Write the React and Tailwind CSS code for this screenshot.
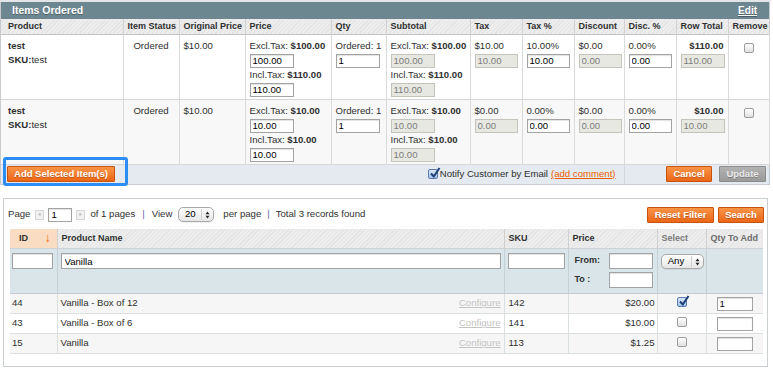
import clsx from 'clsx'

const ITEMS = [
  {
    id: 1,
    price: ['$100.00', '100.00', '$110.00', '110.00'],
    sub: ['$100.00', '100.00', '$110.00', '110.00'],
    tax: ['$10.00', '10.00'],
    taxPct: ['10.00%', '10.00'],
    disc: ['$0.00', '0.00'],
    discPct: ['0.00%', '0.00'],
    total: ['$110.00', '110.00'],
  },
  {
    id: 2,
    price: ['$10.00', '10.00', '$10.00', '10.00'],
    sub: ['$10.00', '10.00', '$10.00', '10.00'],
    tax: ['$0.00', '0.00'],
    taxPct: ['0.00%', '0.00'],
    disc: ['$0.00', '0.00'],
    discPct: ['0.00%', '0.00'],
    total: ['$10.00', '10.00'],
  },
]

const PRODUCTS = [
  { id: 44, name: 'Vanilla - Box of 12', sku: '142', price: '$20.00', checked: true, qty: '1' },
  { id: 43, name: 'Vanilla - Box of 6', sku: '141', price: '$10.00', checked: false, qty: '' },
  { id: 15, name: 'Vanilla', sku: '113', price: '$1.25', checked: false, qty: '' },
]

const stripes =
  'bg-[repeating-linear-gradient(135deg,#ededed_0px,#ededed_2px,#e4e4e4_2px,#e4e4e4_3px)]'

function Field({ value = '', disabled, className }) {
  return (
    <input
      defaultValue={value}
      readOnly
      className={clsx(
        'block h-[14px] border px-[2px] text-[9.6px] leading-[12px] outline-none',
        disabled
          ? 'border-[#c4c4bd] bg-[#e8e8e2] text-[#7d7d7d]'
          : 'border-[#a3a3a3] bg-white text-black shadow-[inset_0_1px_1px_rgba(0,0,0,0.12)]',
        className
      )}
    />
  )
}

function Check({ checked, className }) {
  return (
    <span
      className={clsx(
        'relative inline-flex h-[10px] w-[10px] items-center justify-center rounded-[2px] border align-top',
        checked
          ? 'border-[#5a7bb0] bg-gradient-to-b from-[#d7e6f8] to-[#a9c6ea]'
          : 'border-[#9c9c9c] bg-gradient-to-b from-white to-[#e1e1e1]',
        className
      )}
    >
      {checked && (
        <svg viewBox="0 0 12 12" className="absolute -top-[3px] left-[0px] h-[12px] w-[12px]">
          <path d="M2 6.5 L4.8 9.5 L10.5 1" fill="none" stroke="#1d3d74" strokeWidth="2" />
        </svg>
      )}
    </span>
  )
}

function Button({ children, grey, className }) {
  return (
    <button
      className={clsx(
        'h-[16px] whitespace-nowrap rounded-[1px] border text-[9.5px] font-bold leading-none [text-shadow:0_1px_0_rgba(0,0,0,0.25)]',
        grey
          ? 'border-[#8c8c8c] bg-gradient-to-b from-[#b3b3b3] to-[#9a9a9a] text-[#e9e9e9]'
          : 'border-[#c8530f] bg-gradient-to-b from-[#f99445] to-[#ec6614] text-white',
        className
      )}
    >
      {children}
    </button>
  )
}

function TaxPair({ values, disabled }) {
  return (
    <>
      <p className="whitespace-nowrap">
        Excl.Tax: <b>{values[0]}</b>
      </p>
      <Field value={values[1]} disabled={disabled} className="mt-[2px] w-[44px]" />
      <p className="whitespace-nowrap">
        Incl.Tax: <b>{values[2]}</b>
      </p>
      <Field value={values[3]} disabled={disabled} className="mt-[2px] w-[44px]" />
    </>
  )
}

function ItemRow({ item, shaded }) {
  const cell = 'border-r border-[#dadada] px-[4px] pt-[4px] pb-[2px] align-top leading-[13px]'
  return (
    <tr className={clsx('border-b border-[#d6d6d6]', shaded ? 'bg-[#f8f8f8]' : 'bg-white')}>
      <td className={clsx(cell, 'pl-[7px]')}>
        <p className="font-bold">test</p>
        <p className="mt-[1px]">
          <b>SKU:</b>test
        </p>
      </td>
      <td className={clsx(cell, 'text-center')}>Ordered</td>
      <td className={cell}>$10.00</td>
      <td className={cell}>
        <TaxPair values={item.price} />
      </td>
      <td className={cell}>
        <p className="whitespace-nowrap">Ordered: 1</p>
        <Field value="1" className="mt-[2px] w-[44px]" />
      </td>
      <td className={cell}>
        <TaxPair values={item.sub} disabled />
      </td>
      <td className={cell}>
        <p>{item.tax[0]}</p>
        <Field value={item.tax[1]} disabled className="mt-[2px] w-[43px]" />
      </td>
      <td className={cell}>
        <p>{item.taxPct[0]}</p>
        <Field value={item.taxPct[1]} className="mt-[2px] w-[43px]" />
      </td>
      <td className={cell}>
        <p>{item.disc[0]}</p>
        <Field value={item.disc[1]} disabled className="mt-[2px] w-[43px]" />
      </td>
      <td className={cell}>
        <p>{item.discPct[0]}</p>
        <Field value={item.discPct[1]} className="mt-[2px] w-[43px]" />
      </td>
      <td className={clsx(cell, 'text-right')}>
        <p className="font-bold">{item.total[0]}</p>
        <Field value={item.total[1]} disabled className="mt-[2px] ml-auto w-[44px]" />
      </td>
      <td className={clsx(cell, 'text-center')}>
        <Check className="mt-[4px]" />
      </td>
    </tr>
  )
}

function ArrowBox({ dir, className }) {
  return (
    <span
      className={clsx(
        'inline-flex h-[10px] w-[9px] items-center justify-center border border-[#d6d6d6] bg-[#f1f1f1]',
        className
      )}
    >
      <svg viewBox="0 0 6 6" className="h-[5px] w-[5px]">
        <path d={dir === 'left' ? 'M4.5 0.5 L1 3 L4.5 5.5 Z' : 'M1.5 0.5 L5 3 L1.5 5.5 Z'} fill="#c7c7c7" />
      </svg>
    </span>
  )
}

function Stepper({ label, className }) {
  return (
    <span
      className={clsx(
        'inline-flex h-[15px] items-center rounded-[5px] border border-[#a9a9a9] bg-gradient-to-b from-white to-[#e6e6e6] text-[9.6px] font-normal text-black shadow-[0_1px_0_rgba(0,0,0,0.06)]',
        className
      )}
    >
      <span className="flex-1 text-center">{label}</span>
      <span className="h-[11px] border-l border-[#cfcfcf]" />
      <svg viewBox="0 0 6 10" className="mx-[3px] h-[8px] w-[5px]">
        <path d="M0.5 4 L3 0.5 L5.5 4 Z M0.5 6 L3 9.5 L5.5 6 Z" fill="#222" />
      </svg>
    </span>
  )
}

export default function App() {
  const th = 'whitespace-nowrap border-r border-[#d2d2d2] px-[4px] text-left text-[9px] font-bold text-[#303030]'
  const gth = 'whitespace-nowrap border-r border-[#d0d0d0] px-[4px] text-left text-[9px] font-bold'
  return (
    <div
      className={clsx(
        'relative h-[368px] w-[773px] overflow-hidden bg-white pt-[2px] text-[9.6px] text-[#2f2f2f]',
        "font-['Liberation_Sans',Arial,Helvetica,sans-serif]"
      )}
    >
      <div className="absolute left-0 top-0 h-[2px] w-[771px] bg-[#e3e6e8]" />
      {/* Items ordered */}
      <div className="w-[770px] border-l border-r border-[#c7cbcd]">
        <div className="flex h-[17px] items-center justify-between bg-[#6d8791] pl-[11px] pr-[12px] text-[10.5px] font-bold text-white [text-shadow:0_1px_0_rgba(0,0,0,0.3)]">
          <span>Items Ordered</span>
          <span className="text-[10px] underline">Edit</span>
        </div>
        <table className="w-[768px] table-fixed border-collapse">
          <colgroup>
            <col className="w-[122px]" />
            <col className="w-[56px]" />
            <col className="w-[66px]" />
            <col className="w-[86px]" />
            <col className="w-[55px]" />
            <col className="w-[84px]" />
            <col className="w-[52px]" />
            <col className="w-[52px]" />
            <col className="w-[50px]" />
            <col className="w-[52px]" />
            <col className="w-[52px]" />
            <col className="w-[41px]" />
          </colgroup>
          <thead>
            <tr className={clsx('h-[15px] border-b border-[#c4c4c4] leading-[14px]', stripes)}>
              <th className={clsx(th, 'pl-[7px]')}>Product</th>
              <th className={clsx(th, 'text-center')}>Item Status</th>
              <th className={th}>Original Price</th>
              <th className={th}>Price</th>
              <th className={clsx(th, 'text-center')}>Qty</th>
              <th className={th}>Subtotal</th>
              <th className={th}>Tax</th>
              <th className={th}>Tax %</th>
              <th className={th}>Discount</th>
              <th className={th}>Disc. %</th>
              <th className={clsx(th, 'text-center')}>Row Total</th>
              <th className={clsx(th, 'border-r-0 text-center')}>Remove</th>
            </tr>
          </thead>
          <tbody>
            {ITEMS.map((item, i) => (
              <ItemRow key={item.id} item={item} shaded={i % 2 === 1} />
            ))}
            <tr className="h-[20px] border-b border-[#c9ced2] bg-[#e4eaef]">
              <td colSpan={9} className="border-r border-[#d0d8dd] px-[6px]">
                <div className="flex items-center justify-between">
                  <Button className="w-[108px]">Add Selected Item(s)</Button>
                  <span className="flex items-center whitespace-nowrap pr-[2px]">
                    <Check checked className="mr-[2px]" />
                    Notify Customer by Email
                    <span className="ml-[3px] text-[#eb5e00] underline">(add comment)</span>
                  </span>
                </div>
              </td>
              <td colSpan={3} className="pr-[3px]">
                <div className="flex items-center justify-end gap-[7px]">
                  <Button className="w-[46px]">Cancel</Button>
                  <Button grey className="w-[47px]">
                    Update
                  </Button>
                </div>
              </td>
            </tr>
          </tbody>
        </table>
      </div>

      {/* highlight annotation */}
      <div className="absolute left-[3px] top-[157px] h-[29px] w-[125px] rounded-[3px] border-[3px] border-[#2b8cf3]" />

      {/* Product search grid */}
      <div className="ml-[3px] mt-[13px] h-[169px] w-[765px] border border-[#c9ced0] bg-white">
        <div className="mt-[8px] flex h-[16px] items-center justify-between pl-[4px] pr-[3px]">
          <div className="flex items-center whitespace-nowrap">
            <span>Page</span>
            <ArrowBox dir="left" className="ml-[5px]" />
            <Field value="1" className="ml-[4px] w-[24px]" />
            <ArrowBox dir="right" className="ml-[4px]" />
            <span className="ml-[5px]">of 1 pages</span>
            <span className="mx-[7px] text-[#6a5ea8]">|</span>
            <span>View</span>
            <Stepper label="20" className="ml-[6px] w-[36px]" />
            <span className="ml-[9px]">per page</span>
            <span className="mx-[6px] text-[#6a5ea8]">|</span>
            <span>Total 3 records found</span>
          </div>
          <div className="flex items-center gap-[4px]">
            <Button className="w-[67px]">Reset Filter</Button>
            <Button className="w-[46px]">Search</Button>
          </div>
        </div>

        <table className="ml-[6px] mt-[6px] w-[753px] table-fixed border-collapse">
          <colgroup>
            <col className="w-[47px]" />
            <col className="w-[447px]" />
            <col className="w-[64px]" />
            <col className="w-[89px]" />
            <col className="w-[49px]" />
            <col className="w-[57px]" />
          </colgroup>
          <thead>
            <tr className={clsx('h-[20px] border-b border-[#cdd3d5]', stripes)}>
              <th className={clsx(gth, 'bg-[#f9dcc1] pl-[9px] text-[#303030]')}>
                <span className="flex items-center justify-between pr-[2px]">
                  ID
                  <span className="text-[12px] font-normal text-[#f06a10]">↓</span>
                </span>
              </th>
              <th className={clsx(gth, 'text-[#303030]')}>Product Name</th>
              <th className={clsx(gth, 'text-[#303030]')}>SKU</th>
              <th className={clsx(gth, 'text-[#303030]')}>Price</th>
              <th className={clsx(gth, 'text-center text-[#7a7a7a]')}>Select</th>
              <th className={clsx(gth, 'border-r-0 text-[#6e6e6e]')}>Qty To Add</th>
            </tr>
          </thead>
          <tbody>
            <tr className="h-[45px] border-b border-[#c3cdd1] bg-[#dae5e9] align-top">
              <td className="border-r border-[#c6d1d5] px-[2px] pt-[4px]">
                <Field className="h-[16px] w-[41px]" />
              </td>
              <td className="border-r border-[#c6d1d5] px-[3px] pt-[4px]">
                <Field value="Vanilla" className="h-[16px] w-[440px] pl-[3px]" />
              </td>
              <td className="border-r border-[#c6d1d5] px-[3px] pt-[4px]">
                <Field className="h-[16px] w-[57px]" />
              </td>
              <td className="border-r border-[#c6d1d5] pl-[6px] pr-[4px] pt-[4px] text-[9px]">
                <div className="flex items-center justify-between">
                  <b>From:</b>
                  <Field className="h-[16px] w-[44px]" />
                </div>
                <div className="mt-[3px] flex items-center justify-between">
                  <b>To :</b>
                  <Field className="h-[16px] w-[44px]" />
                </div>
              </td>
              <td className="border-r border-[#c6d1d5] px-[3px] pt-[5px]">
                <Stepper label="Any" className="w-[43px]" />
              </td>
              <td />
            </tr>
            {PRODUCTS.map((p, i) => (
              <tr
                key={p.id}
                className={clsx('h-[20px] border-b border-[#dadfe0]', i % 2 === 0 ? 'bg-[#f6f6f6]' : 'bg-white')}
              >
                <td className="border-r border-[#dadfe0] px-[2px]">{p.id}</td>
                <td className="border-r border-[#dadfe0] px-[3px]">
                  <div className="flex items-center justify-between">
                    <span>{p.name}</span>
                    <span className="text-[#c4c4c4] underline">Configure</span>
                  </div>
                </td>
                <td className="border-r border-[#dadfe0] px-[4px]">{p.sku}</td>
                <td className="border-r border-[#dadfe0] px-[2px] text-right">{p.price}</td>
                <td className="border-r border-[#dadfe0] text-center">
                  <Check checked={p.checked} className="mt-[1px]" />
                </td>
                <td className="px-[10px]">
                  <Field value={p.qty} className="h-[14px] w-[36px]" />
                </td>
              </tr>
            ))}
          </tbody>
        </table>
      </div>
    </div>
  )
}
